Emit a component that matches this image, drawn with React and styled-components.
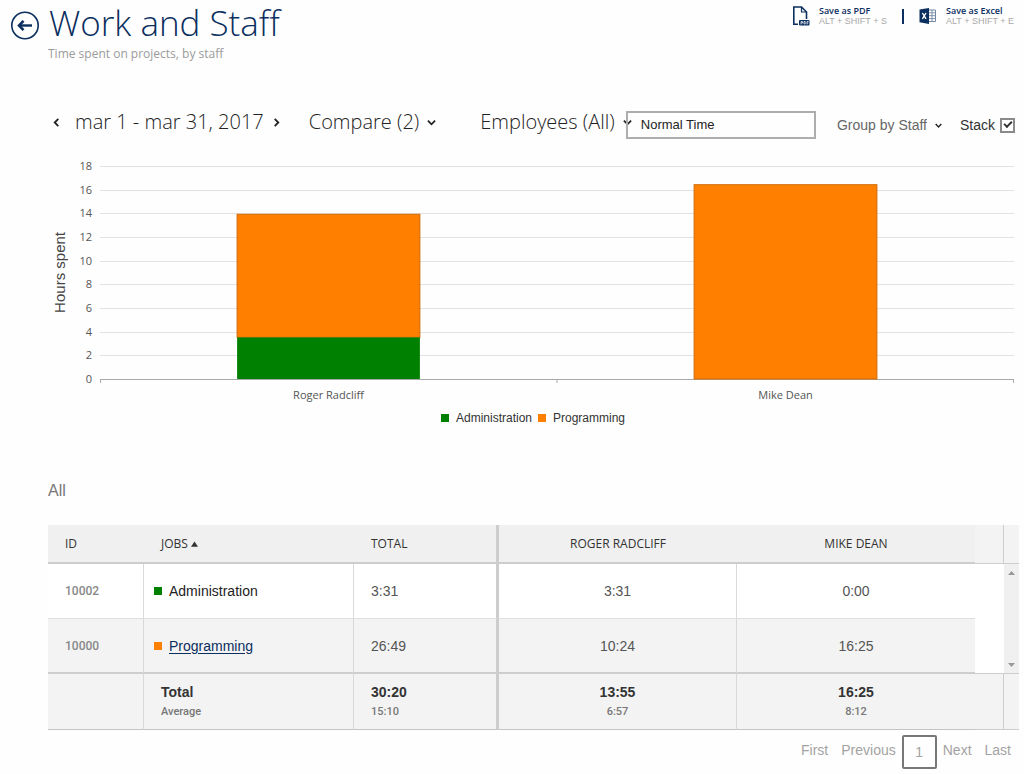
import React, { useState } from "react";
import styled, { createGlobalStyle } from "styled-components";

const sans = `"Liberation Sans", Arial, sans-serif`;
const humanist = `"Open Sans", "Noto Sans", sans-serif`;
const navy = "#0b2f5e";
const line = "#cdcdcd";

const GlobalStyle = createGlobalStyle`
  *, *::before, *::after { box-sizing: border-box; }
  body { margin: 0; background: #fefefe; color: #333; font: 14px/20px ${sans}; }
  button, input, select { font: inherit; color: inherit; }
  h1, h2, p, ul, dl { margin: 0; padding: 0; font-weight: 400; }
  ul { list-style: none; }
`;

const Page = styled.main`
  padding: 0 5px 4px 0;
`;

const Header = styled.header`
  display: flex;
  align-items: flex-start;
  padding: 0 5px 0 10px;
  height: 64px;
`;

const BackButton = styled.button`
  display: flex;
  margin-top: 11px;
  padding: 0;
  border: 0;
  background: none;
  color: ${navy};
`;

const Heading = styled.div`
  flex: 1;
  padding-left: 8px;
`;

const Title = styled.h1`
  padding-left: 1px;
  color: ${navy};
  font: 300 35px/46px ${humanist};
`;

const Subtitle = styled.p`
  color: #9b9b9b;
  font: 12px/16px ${humanist};
`;

const Exports = styled.div`
  display: flex;
  align-items: center;
  gap: 15px;
  padding-top: 4px;
`;

const ExportButton = styled.button`
  display: flex;
  align-items: center;
  gap: 9px;
  padding: 2px 0;
  border: 0;
  background: none;
  color: ${navy};
  text-align: left;
`;

const ExportText = styled.span`
  display: block;
  font: 600 9px/10px ${humanist};
`;

const Shortcut = styled.span`
  display: block;
  color: #a9a9a9;
  font: 9px/10px ${sans};
`;

const Separator = styled.span`
  width: 2px;
  height: 15px;
  background: ${navy};
`;

const Toolbar = styled.form`
  display: flex;
  align-items: center;
  margin-top: 40px;
  padding: 0 4px 0 52px;
  height: 36px;
  white-space: nowrap;
`;

const Period = styled.div`
  display: flex;
  align-items: center;
  color: #222;
  font: 300 20px/28px ${humanist};
`;

const PeriodText = styled.span`
  padding: 0 8px 0 14px;
`;

const StepButton = styled.button`
  display: flex;
  padding: 0;
  border: 0;
  background: none;
`;

const Dropdown = styled.label`
  display: flex;
  align-items: center;
  gap: 8px;
  margin-top: ${(p) => (p.$small ? 6 : 0)}px;
  margin-left: ${(p) => p.$gap || 0};
  color: ${(p) => (p.$small ? "#666" : "#222")};
  font: ${(p) => (p.$small ? `14px/20px ${sans}` : `300 20px/28px ${humanist}`)};
`;

const Select = styled.select`
  appearance: none;
  field-sizing: content;
  padding: 0;
  border: 0;
  background: none;
`;

const TimeInput = styled.input`
  width: 190px;
  height: 28px;
  margin: 5px 0 0 -6px;
  padding: 0 13px;
  border: 2px solid #adadad;
  background: none;
  color: #222;
  font-size: 13px;
`;

const StackLabel = styled.label`
  display: flex;
  align-items: center;
  gap: 5px;
  margin: 6px 0 0 18px;
`;

const CheckBox = styled.input`
  appearance: none;
  width: 15px;
  height: 15px;
  margin: 0;
  border: 2px solid #8a8a8a;
  background: #fff;
  display: grid;
  place-items: center;

  &:checked::before {
    content: "";
    width: 8px;
    height: 5px;
    margin-bottom: 3px;
    border: solid #333;
    border-width: 0 0 2px 2px;
    transform: rotate(-45deg);
  }
`;

const Chart = styled.figure`
  display: grid;
  grid-template-columns: 22px 14px 1fr;
  column-gap: 8px;
  margin: 18px 5px 0 48px;
  color: #555;
  font: 11px/16px ${humanist};
`;

const AxisTitle = styled.div`
  align-self: center;
  justify-self: end;
  writing-mode: vertical-rl;
  transform: rotate(180deg);
  color: #444;
  font: 15px/20px ${sans};
`;

const Ticks = styled.ul`
  display: flex;
  flex-direction: column;
  justify-content: space-between;
  height: 229px;
  text-align: right;
`;

const Plot = styled.svg`
  display: block;
  width: 100%;
  height: 218px;
  margin-top: 8px;
`;

const Names = styled.div`
  grid-column: 3;
  display: flex;

  span {
    flex: 1;
    text-align: center;
  }
`;

const Legend = styled.figcaption`
  grid-column: 1 / -1;
  display: flex;
  justify-content: center;
  gap: 6px;
  margin-top: 7px;
  padding-left: 4px;
  color: #333;
  font: 12px/16px ${sans};
`;

const Key = styled.span`
  display: flex;
  align-items: center;
  gap: 7px;
`;

const Swatch = styled.i`
  flex: none;
  width: 8px;
  height: 8px;
  background: ${(p) => p.$color};
`;

const SectionTitle = styled.h2`
  margin: 55px 0 24px 48px;
  color: #777;
  font: 16px/20px ${sans};
`;

const TableWrap = styled.div`
  margin-left: 48px;
`;

const Table = styled.table`
  width: 100%;
  table-layout: fixed;
  border-collapse: separate;
  border-spacing: 0;
  color: #444;
`;

const HeadCell = styled.th`
  height: 39px;
  padding: 0 17px;
  border-right: ${(p) => (p.$divider ? `3px solid ${line}` : "0")};
  border-bottom: 2px solid ${line};
  background: #f0f0f0;
  color: #333;
  font: 500 12px/16px ${humanist};
  text-align: ${(p) => (p.$center ? "center" : "left")};
  text-transform: uppercase;
`;

const SortButton = styled.button`
  padding: 0;
  border: 0;
  background: none;
  text-transform: inherit;
`;

const Cell = styled.td`
  height: 55px;
  padding: 0 ${(p) => (p.$job ? 10 : 17)}px;
  border-right: ${(p) => (p.$divider ? `3px solid ${line}` : p.$open ? "0" : "1px solid #d9d9d9")};
  border-bottom: ${(p) => (p.$last ? `2px solid ${line}` : "1px solid #dfdfdf")};
  background: ${(p) => (p.$last ? "#f3f3f3" : "#fff")};
  color: ${(p) => (p.$job ? "#222" : "#555")};
  text-align: ${(p) => (p.$center ? "center" : "left")};
`;

const IdCell = styled(Cell)`
  color: #888;
  font: 500 12px/16px Roboto, ${sans};
`;

const FootCell = styled.td`
  height: 56px;
  padding: 0 17px;
  border-right: ${(p) => (p.$divider ? `3px solid ${line}` : p.$open ? "0" : "1px solid #d9d9d9")};
  border-bottom: 1px solid #c4c4c4;
  background: #f3f3f3;
  text-align: ${(p) => (p.$center ? "center" : "left")};
`;

const Total = styled.b`
  display: block;
  color: #333;
`;

const Average = styled.span`
  display: block;
  color: #777;
  font: 500 11px/20px Roboto, ${sans};
`;

const EdgeCell = styled.td`
  padding: 0;
  border-right: ${(p) => (p.$ruled ? `1px solid ${line}` : "0")};
  border-bottom: 1px solid ${line};
  background: ${(p) => p.$fill || "#f3f3f3"};
`;

const ScrollBar = styled.div`
  display: flex;
  flex-direction: column;
  justify-content: space-between;
  align-items: center;
  height: 108px;
  padding: 6px 0;
`;

const ScrollButton = styled.button`
  display: flex;
  padding: 0;
  border: 0;
  background: none;
`;

const JobLink = styled.a`
  color: ${navy};
  text-underline-offset: 2px;
`;

const Pager = styled.nav`
  display: flex;
  justify-content: flex-end;
  align-items: center;
  gap: 13px;
  margin-top: 5px;
  padding-right: 8px;
`;

const PageButton = styled.button`
  height: 24px;
  padding: 0 0 4px;
  border: 0;
  background: none;
  color: #a3a3a3;
`;

const CurrentPage = styled(PageButton)`
  width: 35px;
  height: 34px;
  margin: 0 -7px;
  padding: 0;
  border: 2px solid #777;
  border-radius: 2px;
`;

const jobs = [
  { id: "10002", name: "Administration", color: "#008000", total: "3:31", times: ["3:31", "0:00"] },
  { id: "10000", name: "Programming", color: "#ff7f00", total: "26:49", times: ["10:24", "16:25"], link: true },
];
const staff = [
  { name: "Roger Radcliff", hours: [3.52, 10.4], total: "13:55", average: "6:57" },
  { name: "Mike Dean", hours: [0, 16.42], total: "16:25", average: "8:12" },
];
const ticks = [18, 16, 14, 12, 10, 8, 6, 4, 2, 0];
const PLOT = 213;
const y = (hours) => PLOT - (hours / 18) * PLOT;

function Chevron({ dir = "down", size = 9 }) {
  const turn = { down: 0, left: 90, right: -90 }[dir];
  return (
    <svg width={size} height={size} viewBox="0 0 10 10" fill="none" stroke="#222" strokeWidth="2" aria-hidden="true">
      <path d="M1 3 L5 7 L9 3" transform={`rotate(${turn} 5 5)`} />
    </svg>
  );
}

function BackIcon() {
  return (
    <svg width="30" height="30" viewBox="0 0 30 30" fill="none" stroke="currentColor" aria-hidden="true">
      <circle cx="15" cy="14.5" r="13.2" strokeWidth="1.6" />
      <path d="M22 14.5 H10" strokeWidth="2.4" />
      <path d="M13.5 9.8 L9 14.5 L13.5 19.2" strokeWidth="2.6" />
    </svg>
  );
}

function PdfIcon() {
  return (
    <svg width="18" height="20" viewBox="0 0 18 20" fill="none" stroke="currentColor" strokeWidth="1.6" aria-hidden="true">
      <path d="M6 18.2 H1.8 V1 H9.5 L14.5 6 V13" />
      <path d="M9.5 1 V6 H14.5" strokeWidth="1.2" />
      <rect x="7" y="14" width="10.5" height="5.5" rx="1" fill="currentColor" stroke="none" />
      <path d="M9 18.5 V15.5 H10.5 V17 H9 M12 15.5 V18 H13.2 V15.5 Z M15 18.5 V15.5 H16.6 M15 17 H16.4" stroke="#fff" strokeWidth=".7" />
    </svg>
  );
}

function ExcelIcon() {
  return (
    <svg width="18" height="18" viewBox="0 0 18 18" aria-hidden="true">
      <path d="M9.5 3 H16.5 V14.5 H9.5" fill="#fff" stroke="#7187a3" />
      <path d="M10 5.8 H16 M10 8.7 H16 M10 11.6 H16 M13 3 V14.5" stroke="#7187a3" strokeWidth=".9" />
      <path d="M0.5 2.6 L10 1 V17 L0.5 15.2 Z" fill="currentColor" />
      <path d="M3.4 6 L7 11.8 M7 6 L3.4 11.8" stroke="#fff" strokeWidth="1.4" />
    </svg>
  );
}

function Arrow({ up }) {
  return (
    <svg width="7" height="4" viewBox="0 0 7 4" aria-hidden="true">
      <path d={up ? "M0 4 L3.5 0 L7 4 Z" : "M0 0 L3.5 4 L7 0 Z"} fill="#999" />
    </svg>
  );
}

function Picker({ name, value, ...rest }) {
  return (
    <Dropdown {...rest}>
      <Select aria-label={name}>
        <option>{value}</option>
      </Select>
      <Chevron size={rest.$small ? 7 : 9} />
    </Dropdown>
  );
}

function HoursChart() {
  return (
    <Chart>
      <AxisTitle>Hours spent</AxisTitle>
      <Ticks>
        {ticks.map((t) => (
          <li key={t}>{t}</li>
        ))}
      </Ticks>
      <Plot role="img" aria-label="Hours spent per staff member">
        {ticks.map((t) => (
          <line key={t} x1="0" x2="100%" y1={Math.round(y(t)) + 0.5} y2={Math.round(y(t)) + 0.5} stroke={t ? "#e2e2e2" : "#a9a9a9"} />
        ))}
        {["0.05%", "50%", "99.95%"].map((x) => (
          <line key={x} x1={x} x2={x} y1={PLOT} y2={PLOT + 4} stroke="#a9a9a9" />
        ))}
        {staff.map(({ name, hours: [admin, prog] }, i) => (
          <g key={name}>
            <rect x={`${15 + i * 50}%`} width="20%" y={y(admin + prog)} height={y(admin) - y(admin + prog)} fill="#ff7f00" stroke="#d26a05" />
            {admin > 0 && <rect x={`${15 + i * 50}%`} width="20%" y={y(admin)} height={PLOT - y(admin)} fill="#008000" />}
          </g>
        ))}
      </Plot>
      <Names>
        {staff.map((s) => (
          <span key={s.name}>{s.name}</span>
        ))}
      </Names>
      <Legend>
        {jobs.map((j) => (
          <Key key={j.id}>
            <Swatch $color={j.color} />
            {j.name}
          </Key>
        ))}
      </Legend>
    </Chart>
  );
}

function HoursTable() {
  return (
    <TableWrap>
      <Table>
        <colgroup>
          <col style={{ width: 96 }} />
          <col style={{ width: 210 }} />
          <col style={{ width: 145 }} />
          <col />
          <col />
          <col style={{ width: 29 }} />
          <col style={{ width: 15 }} />
        </colgroup>
        <thead>
          <tr>
            <HeadCell scope="col">ID</HeadCell>
            <HeadCell scope="col" aria-sort="ascending">
              <SortButton type="button">
                Jobs{" "}
                <svg width="7" height="7" viewBox="0 0 8 7" aria-hidden="true">
                  <path d="M0 6 L4 0 L8 6 Z" fill="#333" />
                </svg>
              </SortButton>
            </HeadCell>
            <HeadCell scope="col" $divider>Total</HeadCell>
            {staff.map((s) => (
              <HeadCell scope="col" key={s.name} $center>{s.name}</HeadCell>
            ))}
            <EdgeCell $ruled />
            <EdgeCell />
          </tr>
        </thead>
        <tbody>
          {jobs.map((j, r) => {
            const last = r === jobs.length - 1;
            return (
              <tr key={j.id}>
                <IdCell $last={last}>{j.id}</IdCell>
                <Cell $last={last} $job>
                  <Key>
                    <Swatch $color={j.color} />
                    {j.link ? <JobLink href="#programming">{j.name}</JobLink> : j.name}
                  </Key>
                </Cell>
                <Cell $last={last} $divider>{j.total}</Cell>
                {j.times.map((t, i) => (
                  <Cell key={i} $last={last} $center $open={i === 1}>{t}</Cell>
                ))}
                {r === 0 && (
                  <>
                    <EdgeCell rowSpan={2} $fill="#fff" />
                    <EdgeCell rowSpan={2} $fill="#f0f0f0">
                      <ScrollBar>
                        <ScrollButton type="button" aria-label="Scroll up"><Arrow up /></ScrollButton>
                        <ScrollButton type="button" aria-label="Scroll down"><Arrow /></ScrollButton>
                      </ScrollBar>
                    </EdgeCell>
                  </>
                )}
              </tr>
            );
          })}
        </tbody>
        <tfoot>
          <tr>
            <FootCell />
            <FootCell>
              <Total>Total</Total>
              <Average>Average</Average>
            </FootCell>
            <FootCell $divider>
              <Total>30:20</Total>
              <Average>15:10</Average>
            </FootCell>
            {staff.map((s, i) => (
              <FootCell key={s.name} $center $open={i === 1}>
                <Total>{s.total}</Total>
                <Average>{s.average}</Average>
              </FootCell>
            ))}
            <EdgeCell $ruled />
            <EdgeCell />
          </tr>
        </tfoot>
      </Table>
    </TableWrap>
  );
}

export default function App() {
  const [stacked, setStacked] = useState(true);
  return (
    <Page>
      <GlobalStyle />
      <Header>
        <BackButton type="button" aria-label="Back"><BackIcon /></BackButton>
        <Heading>
          <Title>Work and Staff</Title>
          <Subtitle>Time spent on projects, by staff</Subtitle>
        </Heading>
        <Exports>
          <ExportButton type="button">
            <PdfIcon />
            <ExportText>Save as PDF<Shortcut>ALT + SHIFT + S</Shortcut></ExportText>
          </ExportButton>
          <Separator />
          <ExportButton type="button">
            <ExcelIcon />
            <ExportText>Save as Excel<Shortcut>ALT + SHIFT + E</Shortcut></ExportText>
          </ExportButton>
        </Exports>
      </Header>
      <Toolbar onSubmit={(e) => e.preventDefault()}>
        <Period>
          <StepButton type="button" aria-label="Previous period"><Chevron dir="left" /></StepButton>
          <PeriodText>mar 1 - mar 31, 2017</PeriodText>
          <StepButton type="button" aria-label="Next period"><Chevron dir="right" /></StepButton>
        </Period>
        <Picker name="Compare" value="Compare (2)" $gap="28px" />
        <Picker name="Employees" value="Employees (All)" $gap="44px" />
        <TimeInput aria-label="Time type" defaultValue="Normal Time" />
        <Picker name="Grouping" value="Group by Staff" $gap="auto" $small />
        <StackLabel>
          Stack
          <CheckBox type="checkbox" checked={stacked} onChange={(e) => setStacked(e.target.checked)} />
        </StackLabel>
      </Toolbar>
      <HoursChart />
      <SectionTitle>All</SectionTitle>
      <HoursTable />
      <Pager aria-label="Pages">
        <PageButton type="button">First</PageButton>
        <PageButton type="button">Previous</PageButton>
        <CurrentPage type="button" aria-current="page">1</CurrentPage>
        <PageButton type="button">Next</PageButton>
        <PageButton type="button">Last</PageButton>
      </Pager>
    </Page>
  );
}
